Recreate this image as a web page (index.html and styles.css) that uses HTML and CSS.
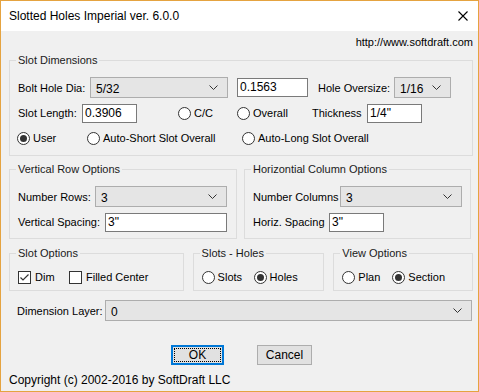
FILE: index.html
```html
<!DOCTYPE html>
<html>
<head>
    <meta charset="utf-8">
    <title>Slotted Holes Imperial</title>
    <link rel="stylesheet" href="styles.css">
</head>
<body>
    <div class="win">
        <div class="titlebar">
            <span class="title">Slotted Holes Imperial ver. 6.0.0</span>
            <svg class="close" width="10" height="10" viewBox="0 0 10 10">
                <path d="M0.5 0.5 L9.5 9.5 M9.5 0.5 L0.5 9.5" stroke="#000" stroke-width="1.1" fill="none"/>
            </svg>
        </div>

        <div class="client">
            <div class="url">http://www.softdraft.com</div>

            <!-- slot dimensions -->
            <fieldset class="grp g-slot">
                <legend>Slot Dimensions</legend>
                <div class="row r1">
                    <span class="lbl w-bolt">Bolt Hole Dia:</span>
                    <div class="combo w-dia"><span>5/32</span><svg width="9" height="5" viewBox="0 0 9 5"><path d="M0.5 0.5 L4.5 4.5 L8.5 0.5" stroke="#333" fill="none"/></svg></div>
                    <div class="txt w-dec">0.1563</div>
                    <span class="lbl w-over">Hole Oversize:</span>
                    <div class="combo w-ovr"><span>1/16</span><svg width="9" height="5" viewBox="0 0 9 5"><path d="M0.5 0.5 L4.5 4.5 L8.5 0.5" stroke="#333" fill="none"/></svg></div>
                </div>
                <div class="row r2">
                    <span class="lbl w-len">Slot Length:</span>
                    <div class="txt w-55">0.3906</div>
                    <label class="opt w-cc"><span class="radio"></span>C/C</label>
                    <label class="opt w-overall"><span class="radio"></span>Overall</label>
                    <span class="lbl w-thk">Thickness</span>
                    <div class="txt w-55">1/4"</div>
                </div>
                <div class="row r3">
                    <label class="opt w-user"><span class="radio on"></span>User</label>
                    <label class="opt w-short"><span class="radio"></span>Auto-Short Slot Overall</label>
                    <label class="opt"><span class="radio"></span>Auto-Long Slot Overall</label>
                </div>
            </fieldset>

            <!-- rows / columns -->
            <div class="pair">
                <fieldset class="grp g-vert">
                    <legend>Vertical Row Options</legend>
                    <div class="row r-combo">
                        <span class="lbl w-rows">Number Rows:</span>
                        <div class="combo w-132"><span>3</span><svg width="9" height="5" viewBox="0 0 9 5"><path d="M0.5 0.5 L4.5 4.5 L8.5 0.5" stroke="#333" fill="none"/></svg></div>
                    </div>
                    <div class="row r-text">
                        <span class="lbl w-vsp">Vertical Spacing:</span>
                        <div class="txt w-122">3"</div>
                    </div>
                </fieldset>
                <fieldset class="grp g-horz">
                    <legend>Horizontial Column Options</legend>
                    <div class="row r-combo">
                        <span class="lbl w-cols">Number Columns</span>
                        <div class="combo w-122"><span>3</span><svg width="9" height="5" viewBox="0 0 9 5"><path d="M0.5 0.5 L4.5 4.5 L8.5 0.5" stroke="#333" fill="none"/></svg></div>
                    </div>
                    <div class="row r-text">
                        <span class="lbl w-hsp">Horiz. Spacing</span>
                        <div class="txt w-55">3"</div>
                    </div>
                </fieldset>
            </div>

            <!-- options -->
            <div class="trio">
                <fieldset class="grp g-sopt">
                    <legend>Slot Options</legend>
                    <div class="row r-small">
                        <label class="opt w-dim"><span class="check"><svg width="11" height="11" viewBox="0 0 11 11"><path d="M1.5 5.5 L4 8 L9.5 2.5" stroke="#333" stroke-width="1.2" fill="none"/></svg></span>Dim</label>
                        <label class="opt"><span class="check"></span>Filled Center</label>
                    </div>
                </fieldset>
                <fieldset class="grp g-sh">
                    <legend>Slots - Holes</legend>
                    <div class="row r-small">
                        <label class="opt w-slots"><span class="radio"></span>Slots</label>
                        <label class="opt"><span class="radio on"></span>Holes</label>
                    </div>
                </fieldset>
                <fieldset class="grp g-view">
                    <legend>View Options</legend>
                    <div class="row r-small">
                        <label class="opt w-plan"><span class="radio"></span>Plan</label>
                        <label class="opt"><span class="radio on"></span>Section</label>
                    </div>
                </fieldset>
            </div>

            <div class="row r-layer">
                <span class="lbl w-layer">Dimension Layer:</span>
                <div class="combo w-367"><span>0</span><svg width="9" height="5" viewBox="0 0 9 5"><path d="M0.5 0.5 L4.5 4.5 L8.5 0.5" stroke="#333" fill="none"/></svg></div>
            </div>

            <div class="buttons">
                <div class="btn btn-ok"><span>OK</span></div>
                <div class="btn btn-cancel">Cancel</div>
            </div>

            <div class="copy">Copyright (c) 2002-2016 by SoftDraft LLC</div>
        </div>
    </div>
</body>
</html>
```

FILE: styles.css
```css
* {
    margin: 0;
    padding: 0;
    box-sizing: border-box;
}
body {
    background: #f0f0f0;
    font-family: "Liberation Sans", Arial, sans-serif;
    font-size: 11px;
    color: #000000;
}
.win {
    width: 479px;
    height: 392px;
    border: 1px solid #e5a340;
    background: #f0f0f0;
    overflow: hidden;
}
.titlebar {
    height: 30px;
    background: #ffffff;
    display: flex;
    align-items: center;
    justify-content: space-between;
    padding: 0 9px 0 8px;
}
.title {
    font-family: "Liberation Sans", sans-serif;
    font-size: 12px;
}
.close {
    margin-right: 1px;
}

.client {
    padding: 0 5px 0 8px;
}
.url {
    height: 22px;
    line-height: 22px;
    text-align: right;
}

/* group boxes */
.grp {
    border: 1px solid #dcdcdc;
    padding: 0;
    min-width: 0;
}
.grp legend {
    margin-left: -2px;
    padding: 0 2px;
    line-height: 14px;
    height: 14px;
    color: #1a1a1a;
}
.row {
    display: flex;
    align-items: center;
}

.g-slot {
    width: 464px;
    padding: 0 0 7px 8px;
}
.r1 { height: 21px; margin-top: 10px; }
.r2 { height: 20px; margin-top: 5px; }
.r3 { height: 20px; margin-top: 5px; margin-left: -1px; }

.lbl { flex: none; }
.w-bolt { width: 72px; }
.w-dia { width: 138px; margin-right: 9px; }
.w-dec { width: 71px; margin-right: 10px; }
.w-over { width: 76px; }
.w-ovr { width: 57px; }
.w-len { width: 64px; }
.w-55 { width: 55px; }
.w-cc { width: 59px; margin-left: 41px; }
.w-overall { width: 75px; }
.w-thk { width: 55px; }
.w-user { width: 70px; }
.w-short { width: 155px; }

.combo {
    flex: none;
    height: 21px;
    background: #e5e5e5;
    border: 1px solid #adadad;
    display: flex;
    align-items: center;
    justify-content: space-between;
    padding: 2px 9px 0 5px;
    font-size: 12px;
}
.combo svg { margin-top: -2px; }
.txt {
    flex: none;
    height: 19px;
    background: #ffffff;
    border: 1px solid #7a7a7a;
    padding: 0 2px;
    line-height: 17px;
    font-size: 12px;
}

.opt {
    display: flex;
    align-items: center;
    flex: none;
}
.radio {
    width: 13px;
    height: 13px;
    border: 1px solid #333333;
    border-radius: 50%;
    background: #ffffff;
    margin-right: 3px;
    display: flex;
    align-items: center;
    justify-content: center;
}
.radio.on::after {
    content: "";
    width: 7px;
    height: 7px;
    border-radius: 50%;
    background: #333333;
}
.check {
    width: 13px;
    height: 13px;
    border: 1px solid #333333;
    background: #ffffff;
    margin-right: 4px;
    display: flex;
    align-items: center;
    justify-content: center;
}

/* two groups side by side */
.pair {
    display: flex;
    gap: 7px;
    margin-top: 6px;
}
.g-vert {
    width: 228px;
    padding: 0 0 6px 8px;
}
.g-horz {
    width: 227px;
    padding: 0 0 6px 8px;
}
.r-combo { height: 21px; margin-top: 10px; }
.r-text { height: 20px; margin-top: 5px; }
.w-rows { width: 77px; }
.w-132 { width: 132px; }
.w-vsp { width: 87px; }
.w-122 { width: 122px; }
.w-cols { width: 87px; }
.w-hsp { width: 76px; }

/* three small groups */
.trio {
    display: flex;
    gap: 9px;
    margin-top: 7px;
}
.r-small { height: 20px; margin-top: 7px; }
.g-sopt { width: 175px; padding: 0 0 3px 8px; }
.g-sh { width: 132px; padding: 0 0 3px 8px; }
.g-view { width: 140px; padding: 0 0 3px 8px; }
.w-dim { width: 51px; }
.w-slots { width: 52px; }
.w-plan { width: 50px; }

.r-layer {
    height: 21px;
    margin-top: 9px;
    padding-left: 8px;
}
.w-layer { width: 88px; }
.w-367 { width: 367px; }

.buttons {
    display: flex;
    margin-top: 24px;
    padding-left: 162px;
    gap: 33px;
}
.btn {
    height: 20px;
    background: #e1e1e1;
    border: 1px solid #adadad;
    display: flex;
    align-items: center;
    justify-content: center;
    font-size: 12px;
}
.btn-ok {
    width: 53px;
    border: 2px solid #0078d7;
    padding: 1px;
}
.btn-ok span {
    flex: 1;
    align-self: stretch;
    border: 1px dotted #000000;
    display: flex;
    align-items: center;
    justify-content: center;
}
.btn-cancel { width: 55px; }

.copy {
    margin-top: 8px;
    line-height: 14px;
    font-size: 12px;
}
```
